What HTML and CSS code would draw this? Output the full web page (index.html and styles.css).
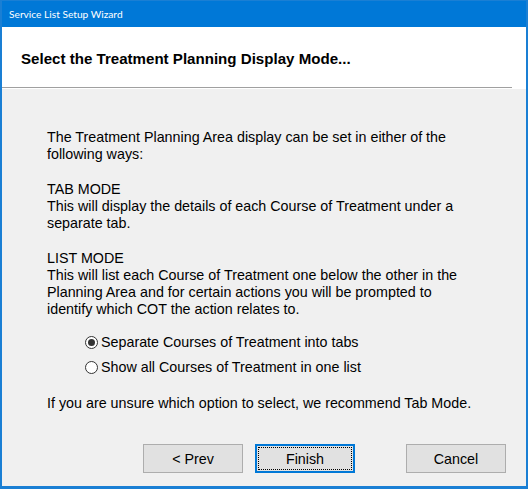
FILE: index.html
```html
<!DOCTYPE html>
<html lang="en">
<head>
  <meta charset="UTF-8">
  <title>Service List Setup Wizard</title>
  <link rel="stylesheet" href="styles.css">
</head>
<body>

  <div class="wizard-window">
    <div class="title-bar">Service List Setup Wizard</div>

    <div class="wizard-header">
      <h2>Select the Treatment Planning Display Mode...</h2>
    </div>

    <div class="wizard-body">
      <p class="para">The Treatment Planning Area display can be set in either of the<br>following ways:</p>

      <p class="para">TAB MODE<br>This will display the details of each Course of Treatment under a<br>separate tab.</p>

      <p class="para">LIST MODE<br>This will list each Course of Treatment one below the other in the<br>Planning Area and for certain actions you will be prompted to<br>identify which COT the action relates to.</p>

      <div class="options">
        <label class="option"><span class="radio checked"></span>Separate Courses of Treatment into tabs</label>
        <label class="option"><span class="radio"></span>Show all Courses of Treatment in one list</label>
      </div>

      <p class="para">If you are unsure which option to select, we recommend Tab Mode.</p>

      <div class="button-row">
        <button class="btn">&lt; Prev</button>
        <button class="btn btn-default"><span class="focus-rect">Finish</span></button>
        <button class="btn btn-cancel">Cancel</button>
      </div>
    </div>
  </div>

</body>
</html>
```

FILE: styles.css
```css
* {
  box-sizing: border-box;
  margin: 0;
  padding: 0;
}

body {
  width: 528px;
  height: 489px;
  overflow: hidden;
  font-family: 'Liberation Sans', Arial, sans-serif;
  color: #000;
  background: #fff;
}

.wizard-window {
  width: 528px;
  height: 489px;
  display: flex;
  flex-direction: column;
  border: 1px solid #1a7fd4;
  border-bottom-width: 3px;
  border-left-width: 2px;
  border-right-width: 2px;
  background: #0078d7;
}

.title-bar {
  flex-shrink: 0;
  height: 26px;
  line-height: 26px;
  padding-left: 7px;
  color: #fff;
  font-family: Lato, 'Noto Sans', sans-serif;
  font-size: 10.2px;
  background: #0078d7;
}

.wizard-header {
  flex-shrink: 0;
  height: 61px;
  background: #fff;
  display: flex;
  align-items: center;
  padding-left: 19px;
  padding-top: 3px;
  border-bottom: 1px solid #a0a0a0;
  margin-right: 14px;
  position: relative;
}

.wizard-header::after {
  content: "";
  position: absolute;
  right: -14px;
  top: 0;
  bottom: -1px;
  width: 14px;
  background: #fff;
}

.wizard-header h2 {
  font-size: 15.1px;
  font-weight: bold;
}

.wizard-body {
  flex: 1;
  min-height: 0;
  background: #f0f0f0;
  border-top: 1px solid #fff;
  padding: 40px 0 13px 45px;
  font-size: 14.3px;
  line-height: 17px;
  display: flex;
  flex-direction: column;
}

.para {
  white-space: nowrap;
  margin-bottom: 18px;
}

.options {
  padding-left: 38px;
  display: flex;
  flex-direction: column;
  gap: 8px;
  margin-top: -2px;
  margin-bottom: 19px;
}

.option {
  display: flex;
  align-items: center;
  gap: 3px;
}

.radio {
  width: 13px;
  height: 13px;
  border: 1px solid #333;
  border-radius: 50%;
  background: #fff;
  position: relative;
}

.radio.checked::after {
  content: "";
  position: absolute;
  left: 2px;
  top: 2px;
  width: 7px;
  height: 7px;
  border-radius: 50%;
  background: #333;
}

.button-row {
  display: flex;
  margin-top: auto;
  padding-left: 96px;
}

.btn {
  width: 100px;
  height: 29px;
  font-family: 'Liberation Sans', Arial, sans-serif;
  font-size: 14.3px;
  color: #000;
  background: #e1e1e1;
  border: 1px solid #adadad;
  margin-right: 12px;
}

.btn-default {
  border: 2px solid #0078d7;
  padding: 1px;
}

.focus-rect {
  display: flex;
  align-items: center;
  justify-content: center;
  height: 100%;
  border: 1px dotted #000;
}

.btn-cancel {
  margin-left: 39px;
}
```
